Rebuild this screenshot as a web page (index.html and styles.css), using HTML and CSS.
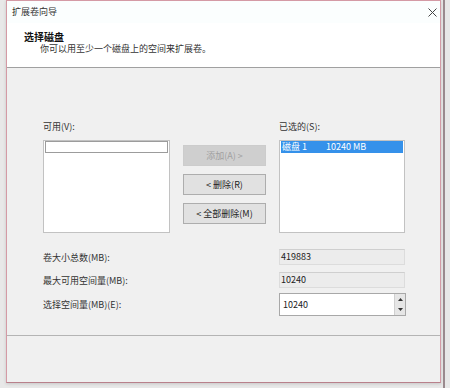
FILE: index.html
```html
<!DOCTYPE html>
<html lang="zh-CN">
<head>
<meta charset="UTF-8">
<title>扩展卷向导</title>
<link rel="stylesheet" href="styles.css">
</head>
<body>
<div class="desk">
  <div class="dialog">
    <div class="header">
      <div class="titlebar">
        <span class="title">扩展卷向导</span>
        <svg class="close" width="9" height="9" viewBox="0 0 9 9">
          <path d="M0.5 0.5 L8.5 8.5 M8.5 0.5 L0.5 8.5" stroke="#444" stroke-width="1" fill="none"/>
        </svg>
      </div>
      <div class="heading">选择磁盘</div>
      <div class="desc">你可以用至少一个磁盘上的空间来扩展卷。</div>
    </div>

    <div class="content">
      <div class="lists">
        <div class="col">
          <div class="label">可用(V):</div>
          <div class="listbox">
            <div class="item empty"></div>
          </div>
        </div>
        <div class="buttons">
          <div class="btn disabled">添加(A) &gt;</div>
          <div class="btn">&lt; 删除(R)</div>
          <div class="btn">&lt; 全部删除(M)</div>
        </div>
        <div class="col">
          <div class="label">已选的(S):</div>
          <div class="listbox">
            <div class="item selected"><span class="disk">磁盘 1</span><span>10240 MB</span></div>
          </div>
        </div>
      </div>

      <div class="fields">
        <div class="row">
          <div class="flabel">卷大小总数(MB):</div>
          <div class="field readonly">419883</div>
        </div>
        <div class="row">
          <div class="flabel">最大可用空间量(MB):</div>
          <div class="field readonly">10240</div>
        </div>
        <div class="row spinrow">
          <div class="flabel">选择空间量(MB)(E):</div>
          <div class="field spin">
            <span class="val">10240</span>
            <div class="arrows">
              <div class="arrow"><svg width="5" height="3" viewBox="0 0 5 3"><path d="M0 3 L2.5 0 L5 3 Z" fill="#333"/></svg></div>
              <div class="arrow"><svg width="5" height="3" viewBox="0 0 5 3"><path d="M0 0 L2.5 3 L5 0 Z" fill="#333"/></svg></div>
            </div>
          </div>
        </div>
      </div>
    </div>

    <div class="footer"></div>
  </div>
  <div class="edge"></div>
</div>
</body>
</html>
```

FILE: styles.css
```css
body {
  margin: 0;
  width: 450px;
  height: 388px;
  overflow: hidden;
  background-color: #d9d9d9;
  font-family: "Noto Sans CJK SC", "Noto Sans", sans-serif;
  font-size: 9px;
  color: #222;
}
.desk {
  display: flex;
  height: 388px;
  padding-left: 6px;
  background-color: #e8e8e8;
  border-left: 2px solid #bdbdbd;
  box-sizing: border-box;
  margin-left: -2px;
}
.dialog {
  width: 435px;
  height: 383px;
  box-sizing: border-box;
  border: 1px solid #d49aa5;
  border-bottom-color: #b9808b;
  background-color: #f0f0f0;
  display: flex;
  flex-direction: column;
  box-shadow: 0 1px 3px rgba(0,0,0,0.15);
}
.edge {
  width: 2px;
  margin-left: 2px;
  background-color: #9a8a8e;
}
.header {
  background-color: #fff;
  height: 66px;
  border-bottom: 1px solid #a0a0a0;
  box-sizing: content-box;
}
.titlebar {
  display: flex;
  justify-content: space-between;
  align-items: center;
  height: 22px;
  padding: 0 3px 0 5px;
  background-color: #fbfefe;
}
.title {
  line-height: 22px;
  color: #333;
}
.heading {
  margin-top: 8px;
  padding-left: 17px;
  line-height: 12px;
  font-size: 10px;
  font-weight: bold;
  color: #111;
}
.desc {
  padding-left: 33px;
  line-height: 12px;
  color: #333;
}
.content {
  flex: 1;
  padding: 53px 0 0 36px;
}
.lists {
  display: grid;
  grid-template-columns: 127px 83px 126px;
  column-gap: 13px;
}
.label {
  line-height: 12px;
  margin-bottom: 7px;
  color: #333;
}
.listbox {
  height: 93px;
  box-sizing: border-box;
  background-color: #fff;
  border: 1px solid #c2c2c2;
  padding: 0 1px;
}
.item {
  height: 12px;
  box-sizing: border-box;
  line-height: 12px;
}
.item.empty {
  border: 1px solid #9c9c9c;
}
.item.selected {
  background-color: #3591ea;
  color: #fff;
  display: flex;
  padding-left: 1px;
}
.disk {
  width: 44px;
}
.buttons {
  display: flex;
  flex-direction: column;
  gap: 8px;
  padding-top: 24px;
}
.btn {
  height: 21px;
  box-sizing: border-box;
  border: 1px solid #adadad;
  background-color: #e1e1e1;
  line-height: 19px;
  text-align: center;
  color: #222;
}
.btn.disabled {
  border-color: #cccccc;
  background-color: #cfcfcf;
  color: #a0a0a0;
}
.fields {
  margin-top: 16px;
  display: flex;
  flex-direction: column;
  gap: 7px;
  width: 370px;
}
.row {
  display: flex;
  align-items: center;
}
.spinrow {
  margin-top: -2px;
}
.flabel {
  width: 236px;
  color: #333;
}
.field {
  width: 126px;
  height: 16px;
  box-sizing: border-box;
  line-height: 14px;
  padding-left: 1px;
}
.readonly {
  background-color: #ececec;
  border: 1px solid #dcdcdc;
  border-top-color: #cfcfcf;
}
.spin {
  width: 127px;
  height: 23px;
  background-color: #fff;
  border: 1px solid #a8a8a8;
  display: flex;
  justify-content: space-between;
  padding-left: 3px;
}
.val {
  line-height: 21px;
}
.arrows {
  display: flex;
  flex-direction: column;
  width: 10px;
  background-color: #e6e6e6;
  border-left: 1px solid #d0d0d0;
}
.arrow {
  flex: 1;
  display: flex;
  align-items: center;
  justify-content: center;
}
.footer {
  height: 46px;
  border-top: 1px solid #b4b4b4;
}
```
